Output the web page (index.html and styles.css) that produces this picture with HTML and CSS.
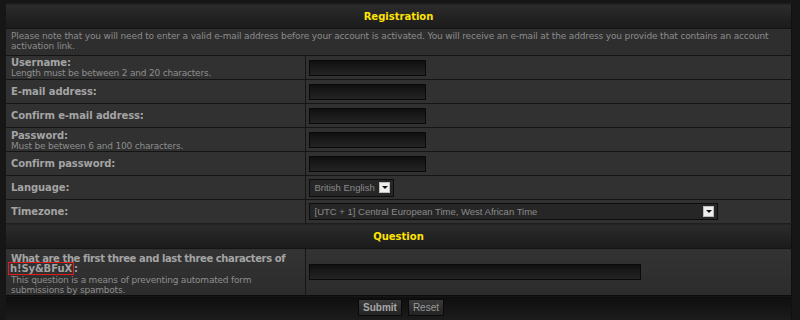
FILE: index.html
```html
<!DOCTYPE html>
<html lang="en">
<head>
  <meta charset="UTF-8">
  <title>Registration</title>
  <link rel="stylesheet" href="styles.css">
</head>
<body>
  <form class="panel">
    <table class="reg">
      <tr class="head"><th colspan="2">Registration</th></tr>
      <tr class="intro">
        <td colspan="2">Please note that you will need to enter a valid e-mail address before your account is activated. You will receive an e-mail at the address you provide that contains an account activation link.</td>
      </tr>
      <tr class="tall">
        <td class="label"><b>Username:</b><br><span>Length must be between 2 and 20 characters.</span></td>
        <td class="field"><input type="text" class="box"></td>
      </tr>
      <tr class="short">
        <td class="label"><b>E-mail address:</b></td>
        <td class="field"><input type="text" class="box"></td>
      </tr>
      <tr>
        <td class="label"><b>Confirm e-mail address:</b></td>
        <td class="field"><input type="text" class="box"></td>
      </tr>
      <tr class="tall pw">
        <td class="label"><b>Password:</b><br><span>Must be between 6 and 100 characters.</span></td>
        <td class="field"><input type="password" class="box"></td>
      </tr>
      <tr>
        <td class="label"><b>Confirm password:</b></td>
        <td class="field"><input type="password" class="box"></td>
      </tr>
      <tr class="sel">
        <td class="label"><b>Language:</b></td>
        <td class="field"><div class="select lang">British English <i class="arrow"></i></div></td>
      </tr>
      <tr class="sel">
        <td class="label"><b>Timezone:</b></td>
        <td class="field"><div class="select zone">[UTC + 1] Central European Time, West African Time <i class="arrow"></i></div></td>
      </tr>
      <tr class="head"><th colspan="2">Question</th></tr>
      <tr class="question">
        <td class="label"><b class="nowrap">What are the first three and last three characters of</b><br><b><em>h!Sy&amp;BFuX</em>:</b><br><span>This question is a means of preventing automated form submissions by spambots.</span></td>
        <td class="field"><input type="text" class="box wide"></td>
      </tr>
      <tr class="actions">
        <td colspan="2">
          <div class="buttons">
            <button type="button" class="btn strong">Submit</button>
            <button type="button" class="btn">Reset</button>
          </div>
        </td>
      </tr>
    </table>
  </form>
</body>
</html>
```

FILE: styles.css
```css
* {
  margin: 0;
  padding: 0;
  box-sizing: border-box;
}

body {
  background-color: #161616;
  font-family: Tahoma, "DejaVu Sans", Verdana, sans-serif;
  color: #9a9a9a;
  padding: 3px 8px 0 6px;
  height: 320px;
  overflow: hidden;
}

/* Main table */
.reg {
  width: 786px;
  border-collapse: collapse;
  background-color: #303030;
  border-right: 1px solid #101010;
}

.reg td, .reg th {
  border-top: 1px solid #141414;
  vertical-align: middle;
}

.reg tr {
  height: 24px;
}

/* Section headers */
.head th {
  height: 25px;
  background: linear-gradient(#2c2c2c, #1a1a1a);
  color: #ffe400;
  font-size: 10px;
  font-weight: bold;
  text-align: center;
  border-top: 1px solid #1e1e1e;
}

.intro td {
  height: 27px;
  padding: 2px 5px 4px;
  font-size: 9px;
  line-height: 10px;
  letter-spacing: -0.15px;
  color: #8c8c8c;
  background-color: #2e2e2e;
}

.tall {
  height: 28px;
}

.short {
  height: 23px;
}

.pw {
  height: 30px;
}

.pw .label {
  padding-top: 2px;
}

.sel {
  height: 26px;
}

.label {
  width: 299px;
  padding: 0 5px;
  font-size: 10px;
  line-height: 10px;
  border-right: 1px solid #161616;
  background-color: #313131;
}

.label b {
  color: #a4a4a4;
  letter-spacing: -0.1px;
}

.label b.nowrap {
  white-space: nowrap;
  letter-spacing: -0.4px;
}

.label span {
  font-size: 9px;
  color: #8e8e8e;
  letter-spacing: -0.2px;
}

.field {
  padding: 0 3px;
  background-color: #313131;
}

/* Inputs */
.box {
  display: block;
  width: 117px;
  height: 16px;
  border: 1px solid #0a0a0a;
  background: linear-gradient(#101010, #242424);
}

.box.wide {
  width: 332px;
}

.select {
  display: flex;
  align-items: center;
  justify-content: space-between;
  height: 18px;
  padding: 0 3px 0 5px;
  border: 1px solid #0c0c0c;
  background-color: #262626;
  color: #8a8a8a;
  font-family: "Liberation Sans", Arial, sans-serif;
  font-size: 9.5px;
  white-space: nowrap;
}

.select.lang {
  width: 85px;
}

.select.zone {
  width: 409px;
  height: 17px;
}

.arrow {
  flex-shrink: 0;
  width: 11px;
  height: 11px;
  background-color: #eeeeee;
  border: 1px solid #bdbdbd;
  position: relative;
}

.arrow::after {
  content: "";
  position: absolute;
  left: 2px;
  top: 3px;
  border-left: 3px solid transparent;
  border-right: 3px solid transparent;
  border-top: 3px solid #111;
}

/* Question */
.question {
  height: 47px;
}

.question .label {
  vertical-align: top;
  padding-top: 5px;
  background: linear-gradient(#333333, #2c2c2c);
}

.question .field {
  background: linear-gradient(#333333, #2c2c2c);
}

.question em {
  font-style: normal;
  border: 1px solid #e31b1b;
  padding: 0 1px;
  margin-left: -3px;
}

.question .label span {
  display: block;
  margin-top: 1px;
}

/* Button bar */
.actions td {
  height: 21px;
  background: linear-gradient(#0e0e0e, #1c1c1c);
  border-top: 1px solid #0c0c0c;
}

.buttons {
  display: flex;
  gap: 6px;
  padding-left: 352px;
}

.btn {
  height: 17px;
  padding: 0 4px;
  border: 1px solid #0a0a0a;
  background: linear-gradient(#3a3a3a, #232323);
  color: #9a9a9a;
  font-family: "Liberation Sans", Arial, sans-serif;
  font-size: 10px;
  line-height: 15px;
}

.btn.strong {
  font-weight: bold;
  color: #a8a8a8;
}
```
